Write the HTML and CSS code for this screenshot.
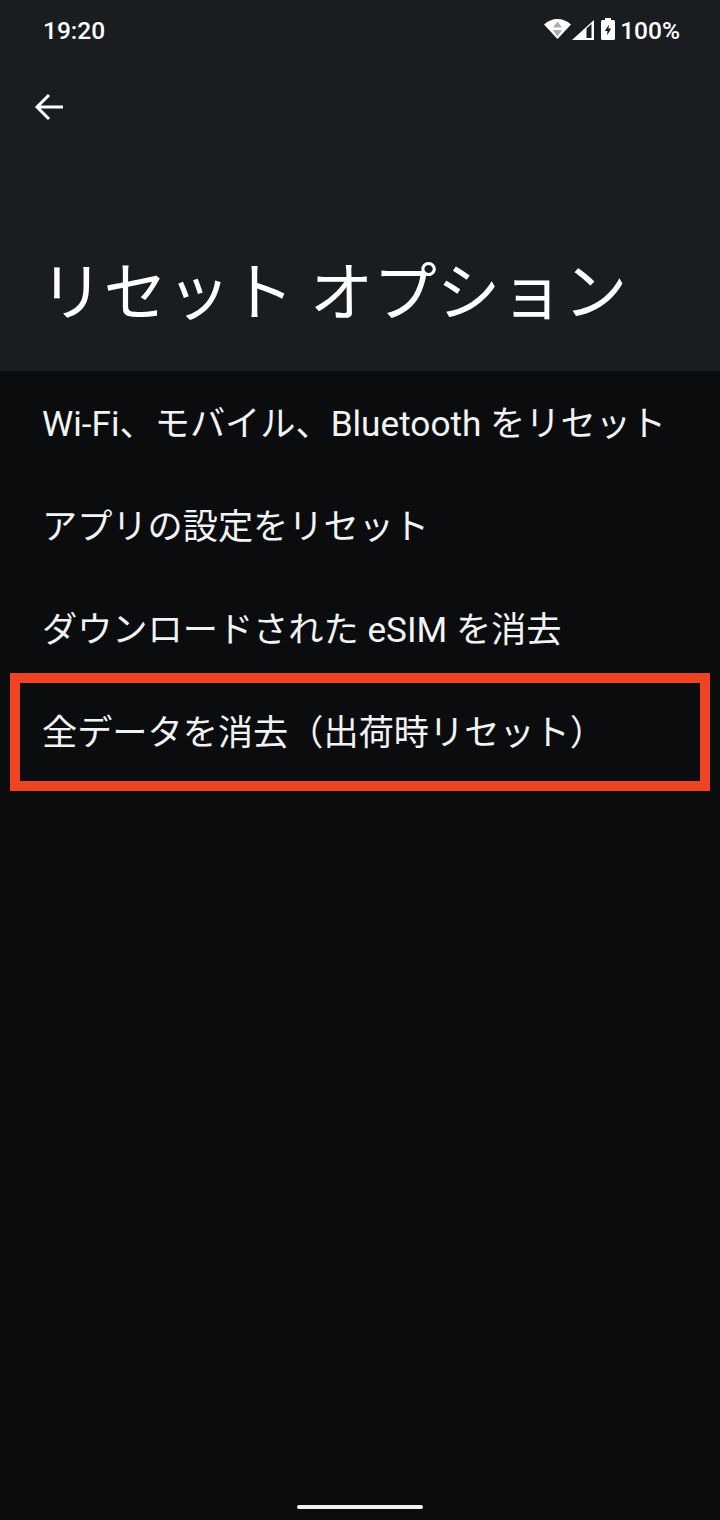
FILE: index.html
```html
<!DOCTYPE html>
<html lang="ja">
<head>
  <meta charset="UTF-8">
  <meta name="viewport" content="width=device-width, initial-scale=1.0">
  <title>リセット オプション</title>
  <link rel="stylesheet" href="styles.css">
</head>
<body>
  <div class="screen">
    <header class="header">
      <div class="status-bar">
        <span class="time">19:20</span>
        <div class="status-icons">
          <svg class="icon-wifi" width="27" height="20" viewBox="0 0 27 20">
            <path fill="#fff" d="M13.500 20 0 5.500Q6 0 13.500 0T27 5.500z"/>
            <path fill="#a9abad" d="M13.500 2.500 18 8.500H9zM13.500 17.500 9 11h9z"/>
          </svg>
          <svg class="icon-signal" width="22" height="20" viewBox="0 0 22 20">
            <path fill="#fff" d="M0 20 22 0v20z"/>
            <path fill="#1a1d20" d="M14.500 8.500 19.500 4v14h-5z"/>
          </svg>
          <svg class="icon-battery" width="14" height="22" viewBox="0 0 14 22">
            <path fill="#fff" d="M4 0h6v2h2.500A1.500 1.500 0 0 1 14 3.500v17a1.500 1.500 0 0 1-1.500 1.500h-11A1.500 1.500 0 0 1 0 20.500v-17A1.500 1.500 0 0 1 1.500 2H4z"/>
            <path fill="#1a1d20" d="M8 6.500 3.800 13h2.700l-.5 4.500L10.200 10.500H7.500z"/>
          </svg>
          <span class="battery-text">100%</span>
        </div>
      </div>
      <button class="back" type="button" aria-label="戻る">
        <svg width="30" height="30" viewBox="0 0 30 30" fill="none" stroke="#fff" stroke-width="3">
          <path d="M29 15H4M15 3 3 15l12 12"/>
        </svg>
      </button>
      <h1 class="title">リセット オプション</h1>
    </header>
    <ul class="list">
      <li class="item">Wi-Fi、モバイル、Bluetooth をリセット</li>
      <li class="item">アプリの設定をリセット</li>
      <li class="item">ダウンロードされた eSIM を消去</li>
      <li class="item highlight">全データを消去（出荷時リセット）</li>
    </ul>
    <div class="nav-pill"></div>
  </div>
</body>
</html>
```

FILE: styles.css
```css
* { box-sizing: border-box; }
html, body { margin: 0; height: 100%; }
body { background: #0b0c0e; color: #f1f3f4; font-family: Roboto, "Noto Sans CJK JP", sans-serif; }
.screen { position: relative; height: 1520px; overflow: hidden; }
.header { height: 371px; background: #1a1d20; color: #fff; padding: 0 40px 0 43px; }
.status-bar { display: flex; align-items: center; justify-content: space-between; height: 60px; font-size: 24.500px; font-weight: 500; }
.status-icons { display: flex; align-items: center; gap: 1px; }
.icon-wifi { margin-top: -2px; }
.icon-signal { margin-top: -1px; }
.icon-battery { margin: -2px 0 0 6px; }
.battery-text { margin-left: 4px; }
.back { display: block; margin: 32px 0 0 -9px; padding: 0; width: 30px; height: 30px; background: none; border: none; }
.title { margin: 127px 0 0 -3px; font-size: 63.500px; font-weight: 400; line-height: 90px; white-space: nowrap; }
.list { list-style: none; margin: 0; padding: 0; }
.item { display: flex; align-items: center; height: 103px; padding: 0 0 4px 42px; font-size: 35.200px; }
.highlight { position: relative; }
.highlight::after { content: ""; position: absolute; left: 10px; right: 10px; top: -7px; height: 118px; border: 10px solid #ef4423; box-sizing: border-box; }
.nav-pill { position: absolute; left: 297px; bottom: 11px; width: 126px; height: 4px; border-radius: 2px; background: #f1f1f1; }
```
